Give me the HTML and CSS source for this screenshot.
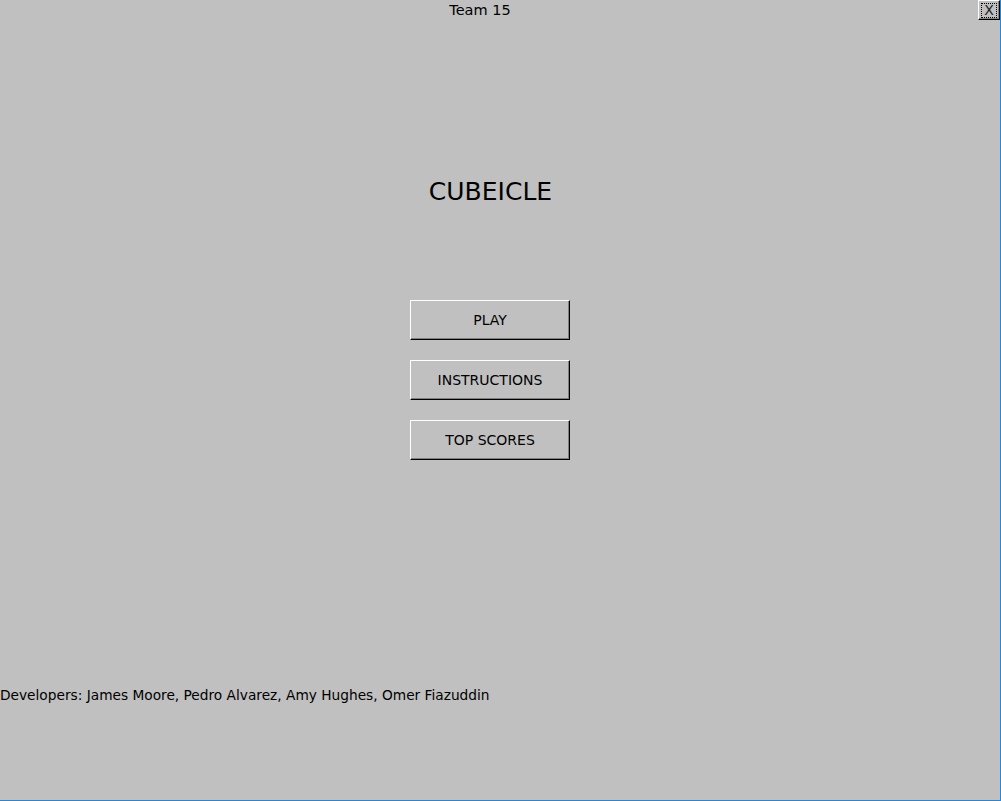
FILE: index.html
```html
<!DOCTYPE html>
<html>
<head>
<meta charset="utf-8">
<link rel="stylesheet" href="styles.css">
</head>
<body>
<div class="window">
  <div class="topbar">
    <div class="team">Team 15</div>
    <div class="close"><span class="focus">X</span></div>
  </div>
  <h1 class="title">CUBEICLE</h1>
  <div class="menu">
    <div class="btn">PLAY</div>
    <div class="btn">INSTRUCTIONS</div>
    <div class="btn">TOP SCORES</div>
  </div>
  <div class="devs">Developers: James Moore, Pedro Alvarez, Amy Hughes, Omer Fiazuddin</div>
</div>
</body>
</html>
```
FILE: styles.css
```css
html, body {
  margin: 0;
  padding: 0;
}
body {
  width: 1001px;
  height: 801px;
  overflow: hidden;
  background: #c0c0c0;
}
.window {
  width: 1000px;
  height: 800px;
  border-right: 1px solid #1e88e5;
  border-bottom: 1px solid #1e88e5;
  background: #c0c0c0;
  font-family: "DejaVu Sans", sans-serif;
  font-size: 14px;
  color: #000;
  display: flex;
  flex-direction: column;
}
.topbar {
  display: flex;
  height: 20px;
}
.team {
  flex: 1;
  text-align: center;
  padding-right: 18px;
  font-size: 14.5px;
  line-height: 20px;
}
.close {
  width: 20px;
  height: 18px;
  border-top: 1px solid #ffffff;
  border-left: 1px solid #ffffff;
  border-right: 1px solid #000;
  border-bottom: 1px solid #000;
  box-shadow: inset -1px -1px 0 #808080;
  display: flex;
  align-items: center;
  justify-content: center;
}
.focus {
  width: 14px;
  height: 13px;
  border: 1px dotted #000;
  font-size: 14px;
  line-height: 13px;
  text-align: center;
  color: #222;
}
.title {
  margin: 160px 0 0 0;
  font-weight: normal;
  font-size: 25px;
  line-height: 24px;
  text-align: center;
  padding-right: 19px;
  height: 24px;
}
.menu {
  margin-top: 96px;
  display: flex;
  flex-direction: column;
  align-items: flex-start;
  gap: 20px;
  padding-left: 410px;
}
.btn {
  box-sizing: border-box;
  width: 160px;
  height: 40px;
  border-top: 1px solid #ffffff;
  border-left: 1px solid #ffffff;
  border-right: 1px solid #000;
  border-bottom: 1px solid #000;
  box-shadow: inset -1px -1px 0 #808080;
  display: flex;
  align-items: center;
  justify-content: center;
  color: #000;
}
.devs {
  margin-top: 227px;
  font-size: 13.72px;
  line-height: 16px;
}
```
